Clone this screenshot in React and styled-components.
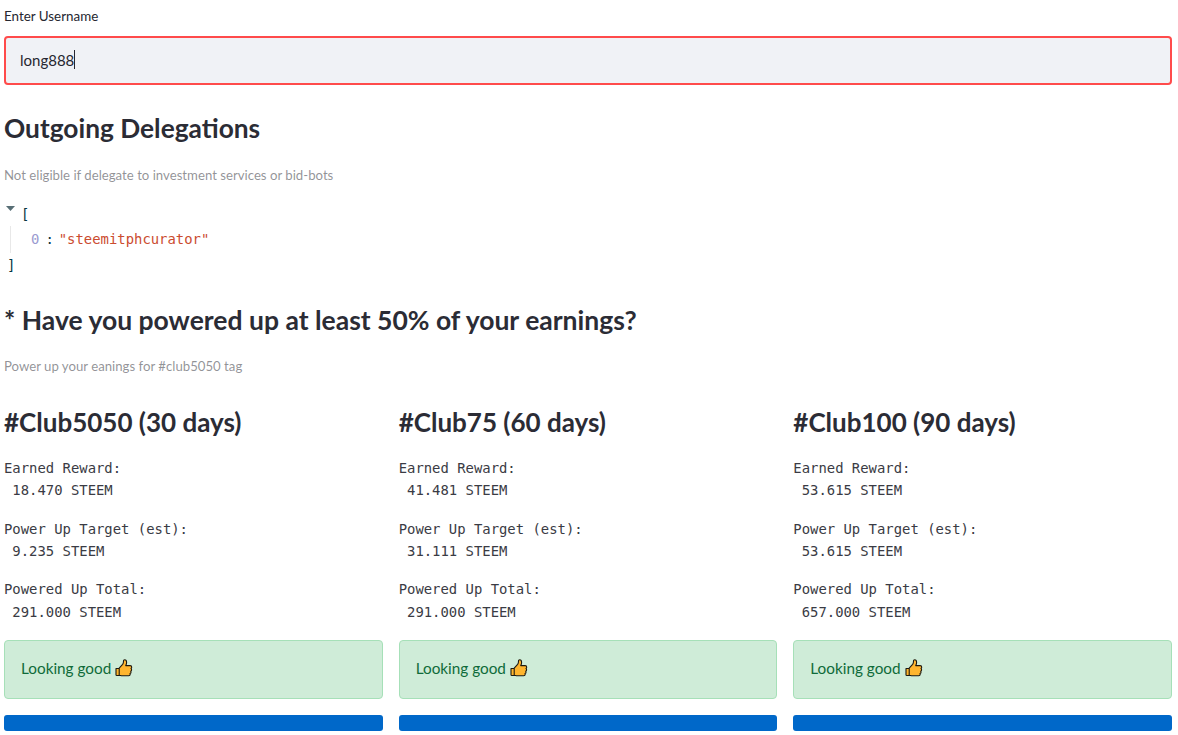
import React from "react";
import styled, { createGlobalStyle } from "styled-components";

const Global = createGlobalStyle`
  html, body { margin: 0; padding: 0; background: #fff; }
  body { font-family: "Lato", "Noto Sans", sans-serif; color: #262730; overflow: hidden; }
`;
const Page = styled.div`
  width: 1168px;
  height: 735px;
  padding: 8px 6px 0 4px;
`;
const Label = styled.label`
  display: block;
  font-size: 13.4px;
  line-height: 16px;
  height: 16px;
  color: #262730;
`;
const InputBox = styled.div`
  margin-top: 12px;
  height: 43px;
  padding: 0 0 2px 14px;
  border: 2px solid #ff4b4b;
  border-radius: 4px;
  background: #f0f2f6;
  display: flex;
  align-items: center;
  font-size: 15px;
  color: #262730;
`;
const Caret = styled.span`
  display: inline-block;
  width: 1px;
  height: 19px;
  background: #262730;
`;
const Heading = styled.h2`
  margin: ${(p) => p.$top}px 0 0;
  font-weight: 700;
  font-size: ${(p) => p.$size}px;
  line-height: 36px;
  color: #2b2c35;
`;
const Caption = styled.p`
  margin: ${(p) => p.$top}px 0 0;
  font-size: 13.2px;
  line-height: 16px;
  color: rgba(38, 39, 48, 0.5);
`;
const Json = styled.div`
  margin-top: 19px;
  font-family: "DejaVu Sans Mono", monospace;
  font-size: 13.9px;
  line-height: 24px;
  color: #073642;
`;
const JsonLine = styled.div`
  display: flex;
  align-items: center;
  height: 24px;
`;
const Chevron = styled.svg`
  width: 9px;
  height: 5px;
  margin: -12px 6px 0 2px;
  flex: none;
`;
const JsonBody = styled.div`
  margin-left: 6px;
  padding: 0 0 2px 20px;
  border-left: 1px solid #e8e8e8;
  height: 25px;
  display: flex;
  align-items: center;
`;
const Index = styled.span`
  color: #9a9ad0;
  margin-right: 6px;
`;
const Str = styled.span`
  color: #cb4b2f;
  margin-left: 5px;
`;
const CloseBracket = styled.span`
  margin-left: 3px;
`;
const Columns = styled.div`
  display: grid;
  grid-template-columns: repeat(3, 1fr);
  column-gap: 16px;
  margin-top: 30px;
`;
const Column = styled.div`
  min-width: 0;
`;
const ClubTitle = styled.h2`
  margin: 0;
  font-weight: 700;
  font-size: 26px;
  line-height: 36px;
  height: 36px;
  color: #2b2c35;
`;
const Stats = styled.div`
  margin: 17px 0 1px;
  font-family: "DejaVu Sans Mono", monospace;
  font-size: 13.9px;
  line-height: 22px;
  color: #3a3b44;
`;
const StatBlock = styled.div`
  height: 61px;
  white-space: pre;
  &:nth-child(2) { height: 60px; }
  &:nth-child(3) { line-height: 23px; }
`;
const Success = styled.div`
  height: 59px;
  box-sizing: border-box;
  border: 1px solid #a6e0b8;
  border-radius: 4px;
  background: #cfecd8;
  color: #0f6b3a;
  font-size: 15.3px;
  display: flex;
  align-items: center;
  gap: 4px;
  padding: 0 0 3px 16px;
`;
const Bar = styled.div`
  margin-top: 16px;
  height: 16px;
  background: #0068c9;
  border-radius: 3px;
`;

const Thumb = () => (
  <svg width="18" height="18" viewBox="0 0 18 18" aria-hidden="true">
    <path
      d="M1 9.5h3.2v7H1.8a.8.8 0 0 1-.8-.8zM4.2 9.200 7.600 5.400c.7-.9.9-2 .9-3.200 0-.8.5-1.400 1.200-1.400 1.200 0 1.900 1.200 1.900 2.600 0 1.200-.4 2.300-.9 3.200h4.400c1 0 1.600.7 1.600 1.600 0 .6-.3 1.100-.7 1.300.4.300.6.800.6 1.300 0 .7-.4 1.200-.9 1.400.2.300.3.600.3 1 0 .7-.4 1.200-1 1.400.1.200.2.500.2.700 0 1-.7 1.500-1.600 1.500H7.200c-1.200 0-2-.5-3-.5z"
      fill="#ffb52e"
      stroke="#1d1a12"
      strokeWidth="1.100"
      strokeLinejoin="round"
    />
  </svg>
);

const clubs = [
  { title: "#Club5050 (30 days)", earned: "18.470", target: "9.235", total: "291.000" },
  { title: "#Club75 (60 days)", earned: "41.481", target: "31.111", total: "291.000" },
  { title: "#Club100 (90 days)", earned: "53.615", target: "53.615", total: "657.000" },
];

export default function App() {
  return (
    <Page>
      <Global />
      <Label>Enter Username</Label>
      <InputBox>
        long888
        <Caret />
      </InputBox>
      <Heading $top={25} $size={26.3}>Outgoing Delegations</Heading>
      <Caption $top={21}>Not eligible if delegate to investment services or bid-bots</Caption>
      <Json>
        <JsonLine>
          <Chevron viewBox="0 0 9 5"><path d="M0 0h9L4.500 5z" fill="#586e75" /></Chevron>
          [
        </JsonLine>
        <JsonBody>
          <Index>0</Index>:<Str>"steemitphcurator"</Str>
        </JsonBody>
        <JsonLine><CloseBracket>]</CloseBracket></JsonLine>
      </Json>
      <Heading $top={25} $size={26.5}>* Have you powered up at least 50% of your earnings?</Heading>
      <Caption $top={20}>Power up your eanings for #club5050 tag</Caption>
      <Columns>
        {clubs.map((c) => (
          <Column key={c.title}>
            <ClubTitle>{c.title}</ClubTitle>
            <Stats>
              <StatBlock>{`Earned Reward:\n ${c.earned} STEEM`}</StatBlock>
              <StatBlock>{`Power Up Target (est):\n ${c.target} STEEM`}</StatBlock>
              <StatBlock>{`Powered Up Total:\n ${c.total} STEEM`}</StatBlock>
            </Stats>
            <Success>Looking good <Thumb /></Success>
            <Bar />
          </Column>
        ))}
      </Columns>
    </Page>
  );
}
